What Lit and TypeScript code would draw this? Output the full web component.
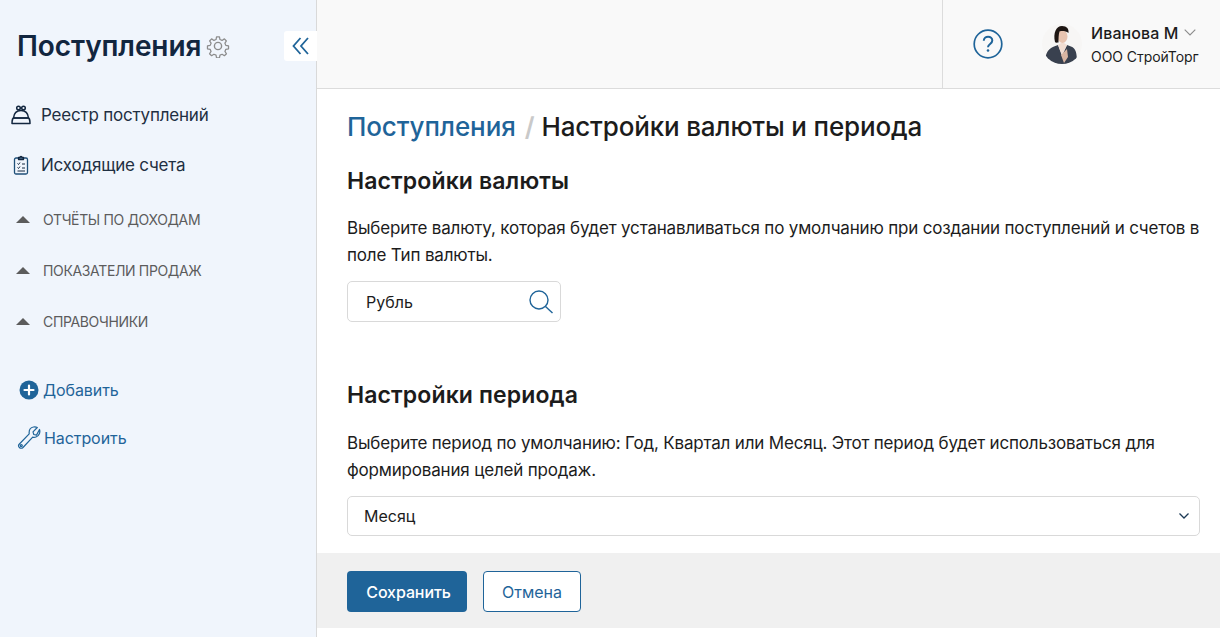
import { LitElement, html, css } from "lit";
import { customElement } from "lit/decorators.js";

@customElement("app-root")
export class AppRoot extends LitElement {
  static styles = css`
    :host { display: block; width: 1220px; height: 637px; overflow: hidden; font-family: Inter, "Noto Sans", sans-serif; color: #1c1c1c; background: #fff; }
    * { box-sizing: border-box; }
    .app { display: flex; height: 637px; }
    .side { width: 317px; flex: none; background: #f0f5fc; border-right: 1px solid #d9d9d9; display: flex; flex-direction: column; position: relative; }
    .brand { display: flex; align-items: center; gap: 5px; height: 90px; padding: 2px 0 0 17px; }
    .brand h1 { margin: 0; font-size: 28px; line-height: 34px; font-weight: 600; color: #12263f; letter-spacing: -0.1px; }
    .collapse { position: absolute; top: 31px; right: -1px; width: 33px; height: 30px; background: #fff; border-radius: 3px 0 0 3px; display: flex; align-items: center; justify-content: center; }
    .nav { display: flex; align-items: center; height: 50px; padding-left: 11px; gap: 10px; font-size: 17px; color: #1f2f42; letter-spacing: -0.2px; }
    .nav svg { width: 20px; flex: none; }
    .groups { display: flex; flex-direction: column; margin-top: 4px; }
    .group { display: flex; align-items: center; height: 51px; padding-left: 16px; font-size: 14px; color: #5c5c5c; letter-spacing: -0.35px; gap: 13px; }
    .tri { width: 0; height: 0; border-left: 7px solid transparent; border-right: 7px solid transparent; border-bottom: 7px solid #5c5c5c; }
    .actions { margin-top: 19px; display: flex; flex-direction: column; }
    .act { display: flex; align-items: center; height: 48px; padding-left: 17px; gap: 3px; font-size: 16px; color: #1f6499; letter-spacing: -0.08px; }
    .act svg { flex: none; }
    .act svg.plus { margin-right: -1px; }
    .main { flex: 1; min-width: 0; display: flex; flex-direction: column; }
    .top { height: 89px; flex: none; background: #f9f9f9; border-bottom: 1px solid #dcdcdc; display: flex; justify-content: flex-end; }
    .tools { width: 278px; border-left: 1px solid #dcdcdc; display: flex; align-items: center; padding-left: 30px; }
    .ava { width: 40px; height: 40px; margin-left: 39px; margin-right: 9px; margin-top: -1px; flex: none; }
    .user { display: flex; flex-direction: column; gap: 5px; }
    .uname { display: flex; align-items: center; gap: 5px; font-size: 16px; line-height: 20px; font-weight: 500; color: #1c1c1c; letter-spacing: 0.1px; }
    .org { font-size: 14px; line-height: 18px; color: #1c1c1c; letter-spacing: -0.05px; }
    .content { flex: 1; padding: 21px 20px 0 30px; min-height: 0; }
    .crumbs { font-size: 26px; line-height: 34px; font-weight: 500; letter-spacing: -0.1px; display: flex; align-items: center; }
    .crumbs a { color: #1f6499; }
    .crumbs .sep { color: #c9c9c9; margin: 0 7px 0 9px; font-weight: 600; }
    .crumbs .cur { letter-spacing: -0.17px; }
    h2 { margin: 23px 0 0; font-size: 23px; line-height: 28px; font-weight: 600; color: #1c1c1c; letter-spacing: 0.12px; }
    p { margin: 20px 0 0; font-size: 17px; line-height: 27px; color: #1c1c1c; letter-spacing: -0.18px; }
    .search { margin-top: 12px; width: 214px; height: 41px; border: 1px solid #d9d9d9; border-radius: 5px; display: flex; align-items: center; justify-content: space-between; padding: 0 6px 0 18px; font-size: 16px; background: #fff; }
    h2.period { margin-top: 59px; }
    .period + p { margin-top: 21px; }
    .select { margin-top: 12px; height: 40px; border: 1px solid #d9d9d9; border-radius: 5px; display: flex; align-items: center; justify-content: space-between; padding: 0 10px 0 16px; font-size: 16px; background: #fff; }
    .foot { height: 75px; margin-bottom: 9px; flex: none; background: #f0f0f0; padding: 18px 0 0 30px; display: flex; gap: 16px; align-items: flex-start; }
    .btn { height: 41px; border-radius: 4px; display: flex; align-items: center; justify-content: center; font-size: 16px; }
    .save { width: 120px; background: #1f6499; color: #fff; font-weight: 500; letter-spacing: -0.1px; padding-left: 3px; }
    .cancel { width: 98px; background: #fff; color: #1f6499; border: 1px solid #1f6499; }
  `;

  render() {
    return html`
      <div class="app">
        <aside class="side">
          <div class="brand">
            <h1>Поступления</h1>
            <svg width="24" height="24" viewBox="0 0 24 24" fill="none" stroke="#8c8c8c" stroke-width="1.4" stroke-linejoin="round">
              <circle cx="12" cy="12" r="3.6"/>
              <path d="M10.4 1.8h3.2l.6 3 2.3 1 2.6-1.7 2.2 2.3-1.6 2.5 1 2.4 3 .6v3.2l-3 .6-1 2.3 1.7 2.6-2.3 2.2-2.5-1.6-2.4 1-.6 3h-3.2l-.6-3-2.4-1-2.5 1.6-2.3-2.2 1.7-2.6-1-2.3-3-.6v-3.2l3-.6 1-2.4-1.6-2.5 2.2-2.3 2.6 1.7 2.3-1z" transform="translate(1.2 1.2) scale(.9)"/>
            </svg>
          </div>
          <div class="collapse">
            <svg width="18" height="18" viewBox="0 0 18 18" fill="none" stroke="#1f6499" stroke-width="1.8"><path d="M8.500 1 1.500 9l7 8M16 1 9 9l7 8"/></svg>
          </div>
          <div class="nav">
            <svg height="20" viewBox="0 0 20 20" fill="none" stroke="#12263f" stroke-width="1.5" stroke-linejoin="round"><circle cx="7.500" cy="3" r="1.800"/><circle cx="12.500" cy="3" r="1.800"/><path d="M2.500 13C3 8 6 5.500 10 5.500s7 2.500 7.500 7.500z"/><path d="M1 18.500c0-3 1-5.500 1.500-5.500h15c.5 0 1.500 2.500 1.500 5.500z"/></svg>
            <span>Реестр поступлений</span>
          </div>
          <div class="nav">
            <svg height="20" viewBox="0 0 20 20" fill="none" stroke="#12263f" stroke-width="1.3" stroke-linejoin="round"><rect x="3.500" y="3" width="13" height="16" rx="1.500" stroke="#1f4f78"/><path d="M7.500 4.500V2.500h1.500a1 1 0 0 1 2 0h1.500v2z"/><path d="m6.500 8.500 1 1 1.500-2M11 9h3M6.500 12.500l1 1 1.500-2M11 13h3M6.500 16h7.500" stroke-width="1"/></svg>
            <span>Исходящие счета</span>
          </div>
          <div class="groups">
            <div class="group"><i class="tri"></i><span>ОТЧЁТЫ ПО ДОХОДАМ</span></div>
            <div class="group"><i class="tri"></i><span>ПОКАЗАТЕЛИ ПРОДАЖ</span></div>
            <div class="group"><i class="tri"></i><span>СПРАВОЧНИКИ</span></div>
          </div>
          <div class="actions">
            <div class="act">
              <svg class="plus" width="24" height="20" viewBox="0 0 24 20"><circle cx="12" cy="10" r="9.500" fill="#1f6499"/><path d="M12 5.500v9M7.500 10h9" stroke="#fff" stroke-width="2.200" stroke-linecap="round"/></svg>
              <span>Добавить</span>
            </div>
            <div class="act">
              <svg width="24" height="24" viewBox="0 0 24 24" fill="none" stroke="#1f6499" stroke-width="1.200" stroke-linejoin="round"><path d="M22.500 3.500c1 3-.5 6.500-3.500 7.500-1.200.4-2.300.4-3.300.1L6 21.500c-1 1-2.600 1-3.600 0s-1-2.500 0-3.500l9.800-10.200C11.800 4 13.500 1.500 16.500 1c1.500-.2 2.800 0 3.800.5L16 5.800l.8 2.700 2.700.6z"/><circle cx="4.300" cy="19.600" r="1"/></svg>
              <span>Настроить</span>
            </div>
          </div>
        </aside>
        <div class="main">
          <header class="top">
            <div class="tools">
              <svg width="30" height="30" viewBox="0 0 30 30" fill="none" stroke="#1f6499" stroke-width="1.700"><circle cx="15" cy="15" r="13.800"/><path d="M10.800 11.800c0-2.500 2-4 4.300-4s4.200 1.500 4.200 3.800c0 3.400-4.300 3.400-4.300 6.700" stroke-width="2"/><circle cx="15" cy="21.500" r="1.300" fill="#1f6499" stroke="none"/></svg>
              <svg class="ava" viewBox="0 0 40 40">
                <defs><clipPath id="c"><circle cx="20" cy="20" r="20"/></clipPath></defs>
                <g clip-path="url(#c)">
                  <rect width="40" height="40" fill="#f7f6f5"/>
                  <path d="M3 40c0-11 3-15 9-17.500l4-1.500 4 10 5-10 4 1.500c5 2 6 6 6 17.500z" fill="#39414f"/>
                  <path d="M16 21l4 11 5-11-3-2h-3z" fill="#f1ddd2"/>
                  <path d="M19 31l3 8 4-6-1-8z" fill="#d9b5a2"/>
                  <ellipse cx="20.500" cy="12.500" rx="5" ry="6.500" fill="#e8c4b0"/>
                  <path d="M13 18C11 9 14 2 20 2c5 0 7 3 6.500 7-3-2-6-2.500-9-1.500-1 3-1 7-1 11-1 0-3 .5-3.500-.5z" fill="#1e1613"/>
                </g>
              </svg>
              <div class="user">
                <div class="uname">
                  <span>Иванова М</span>
                  <svg width="12" height="7" viewBox="0 0 12 7" fill="none" stroke="#8c8c8c" stroke-width="1.100"><path d="m.7.7 5.300 5.300L11.300.7"/></svg>
                </div>
                <div class="org">ООО СтройТорг</div>
              </div>
            </div>
          </header>
          <main class="content">
            <div class="crumbs"><a>Поступления</a><span class="sep">/</span><span class="cur">Настройки валюты и периода</span></div>
            <h2>Настройки валюты</h2>
            <p>Выберите валюту, которая будет устанавливаться по умолчанию при создании поступлений и счетов в поле Тип валюты.</p>
            <div class="search">
              <span>Рубль</span>
              <svg width="26" height="26" viewBox="0 0 26 26" fill="none" stroke="#1f6499" stroke-width="1.400"><circle cx="11" cy="11" r="9"/><path d="m17.500 17.500 7 6.500"/></svg>
            </div>
            <h2 class="period">Настройки периода</h2>
            <p>Выберите период по умолчанию: Год, Квартал или Месяц. Этот период будет использоваться для формирования целей продаж.</p>
            <div class="select">
              <span>Месяц</span>
              <svg width="10" height="6" viewBox="0 0 10 6" fill="none" stroke="#1c3a55" stroke-width="1.300"><path d="m.5.500 4.500 4.500L9.500.5"/></svg>
            </div>
          </main>
          <footer class="foot">
            <div class="btn save">Сохранить</div>
            <div class="btn cancel">Отмена</div>
          </footer>
        </div>
      </div>
    `;
  }
}
